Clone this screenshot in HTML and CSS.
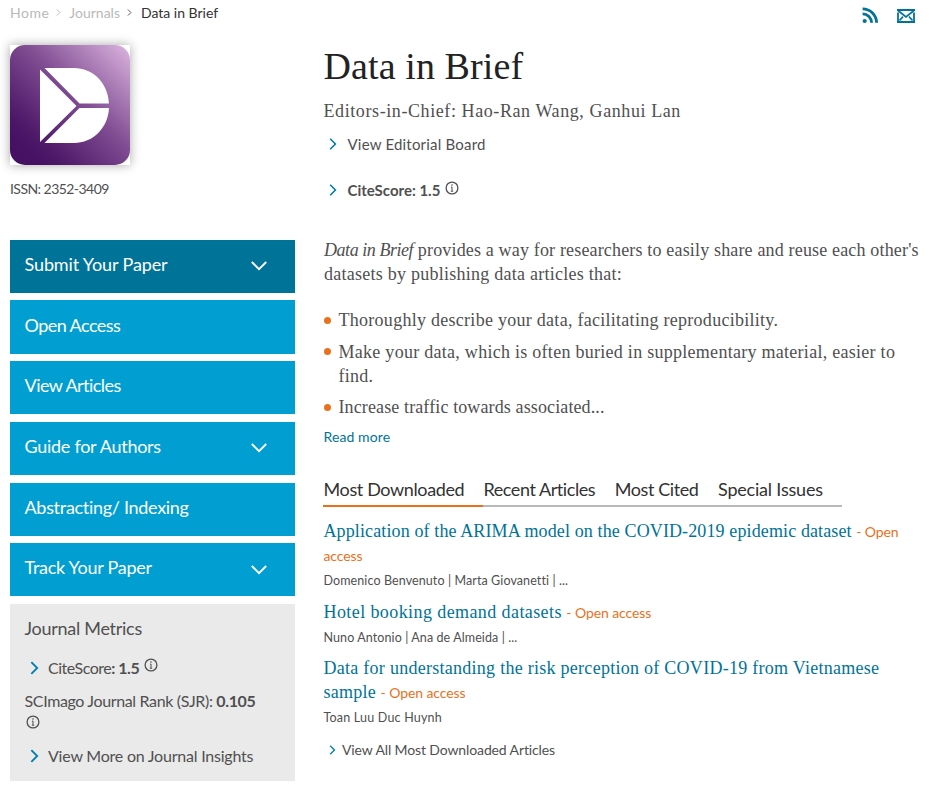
FILE: index.html
```
<!DOCTYPE html>
<html lang="en">
<head>
<meta charset="utf-8">
<title>Data in Brief</title>
<link rel="stylesheet" href="styles.css">
</head>
<body>
<svg width="0" height="0" class="defs" aria-hidden="true">
  <symbol id="chev" viewBox="0 0 8 12"><path d="M1.2 .8 6.4 6 1.2 11.2" fill="none" stroke="currentColor" stroke-width="1.6"/></symbol>
  <symbol id="down" viewBox="0 0 16 10"><path d="M.8 1 8 8.2 15.2 1" fill="none" stroke="currentColor" stroke-width="1.9"/></symbol>
  <symbol id="info" viewBox="0 0 14 14"><circle cx="7" cy="7" r="5.9" fill="none" stroke="currentColor" stroke-width="1.3"/><path d="M7 6v4.2M6 6.1h1M5.800 10.200h2.400" stroke="currentColor" stroke-width="1" fill="none"/><circle cx="7" cy="4" r=".8" fill="currentColor"/></symbol>
</svg>
<header class="top">
  <nav class="crumbs">
    <a class="c-home">Home</a><svg class="sep s1"><use href="#chev"/></svg><a class="c-journals">Journals</a><svg class="sep s2"><use href="#chev"/></svg><span class="c-cur">Data in Brief</span>
  </nav>
  <div class="share">
    <svg width="17" height="17" viewBox="0 0 17 17"><circle cx="2.7" cy="14" r="2.1" fill="currentColor"/><path d="M.6 6.800a9 9 0 0 1 9 9M.6 1.800a14 14 0 0 1 14 14" fill="none" stroke="currentColor" stroke-width="2.8"/></svg>
    <svg width="18" height="14" viewBox="0 0 18 14"><path d="M1 3.500V14M17 3.500V14M0 1H18M0 13H18" stroke="currentColor" stroke-width="1.8" fill="none"/><path d="M1 1.500 9 8 17 1.500M2.500 11.500 6 7.600M15.500 11.500 12 7.600" stroke="currentColor" stroke-width="1.700" fill="none"/></svg>
  </div>
</header>
<section class="intro">
  <div class="cover-col">
    <div class="cover">
      <svg width="120" height="120" viewBox="0 0 120 120">
        <defs><linearGradient id="g" x1="0.12" y1="0.88" x2="1" y2="0"><stop offset="0" stop-color="#471163"/><stop offset=".1" stop-color="#4b1767"/><stop offset=".5" stop-color="#804c92"/><stop offset="1" stop-color="#dcb5e0"/></linearGradient></defs>
        <rect width="120" height="120" rx="15" fill="url(#g)"/>
        <path fill="#fff" d="M30 24.500 66.500 61 30 97ZM34.500 23H64C83 23 98 38 99 58.500H69.500ZM69.500 63H99C98 83 83 98 64 98H34.500Z"/>
      </svg>
    </div>
    <p class="issn">ISSN: 2352-3409</p>
  </div>
  <div class="head">
    <h1>Data in Brief</h1>
    <p class="editors">Editors-in-Chief: Hao-Ran Wang, Ganhui Lan</p>
    <a class="hlink"><svg class="ch"><use href="#chev"/></svg><span class="board">View Editorial Board</span></a>
    <a class="hlink score"><svg class="ch"><use href="#chev"/></svg><b>CiteScore: 1.5</b><svg class="info"><use href="#info"/></svg></a>
  </div>
</section>
<main class="body">
  <aside>
    <nav class="menu">
      <a class="on"><span class="m1">Submit Your Paper</span><svg><use href="#down"/></svg></a>
      <a><span class="m2">Open Access</span></a>
      <a><span class="m3">View Articles</span></a>
      <a><span class="m4">Guide for Authors</span><svg><use href="#down"/></svg></a>
      <a><span class="m5">Abstracting/ Indexing</span></a>
      <a><span class="m6">Track Your Paper</span><svg><use href="#down"/></svg></a>
    </nav>
    <div class="metrics">
      <h2>Journal Metrics</h2>
      <a class="row r1"><svg class="ch"><use href="#chev"/></svg><span>CiteScore<b>: 1.5</b></span><svg class="info"><use href="#info"/></svg></a>
      <p class="sjr">SCImago Journal Rank (SJR): <b>0.105</b></p>
      <svg class="info below"><use href="#info"/></svg>
      <a class="row r3"><svg class="ch"><use href="#chev"/></svg><span>View More on Journal Insights</span></a>
    </div>
  </aside>
  <article>
    <p class="serif"><i>Data in Brief</i><span class="d1"> provides a way for researchers to easily share and reuse each other's</span><br><span class="d2">datasets by publishing data articles that:</span></p>
    <ul class="serif">
      <li><span class="l1">Thoroughly describe your data, facilitating reproducibility.</span></li>
      <li><span class="l2">Make your data, which is often buried in supplementary material, easier to</span><br><span class="l3">find.</span></li>
      <li><span class="l4">Increase traffic towards associated...</span></li>
    </ul>
    <a class="more">Read more</a>
    <div class="tabs"><a class="on t1">Most Downloaded</a><a class="t2">Recent Articles</a><a class="t3">Most Cited</a><a class="t4">Special Issues</a></div>
    <div class="item"><p class="title"><span class="a1">Application of the ARIMA model on the COVID-2019 epidemic dataset</span> <em>- Open<br>access</em></p><p class="by b1">Domenico Benvenuto | Marta Giovanetti | ...</p></div>
    <div class="item"><p class="title"><span class="a2">Hotel booking demand datasets</span> <em>- Open access</em></p><p class="by b2">Nuno Antonio | Ana de Almeida | ...</p></div>
    <div class="item"><p class="title"><span class="a3">Data for understanding the risk perception of COVID-19 from Vietnamese</span><br><span class="a4">sample</span> <em>- Open access</em></p><p class="by b3">Toan Luu Duc Huynh</p></div>
    <a class="all"><svg class="ch"><use href="#chev"/></svg><span>View All Most Downloaded Articles</span></a>
  </article>
</main>
</body>
</html>
```
FILE: styles.css
```
* { box-sizing: border-box; }
body { margin: 0; height: 789px; overflow: hidden; background: #fff; color: #505050; font-family: Lato, "Open Sans", sans-serif; white-space: nowrap; font-size: 15px; }
p, h1, h2, ul { margin: 0; padding: 0; font-weight: 400; }
.defs { position: absolute; }
svg { flex: none; display: block; }
b { font-weight: 700; }
.top { display: flex; justify-content: space-between; height: 45px; padding: 2px 14px 0 10px; }
.crumbs { display: flex; align-items: center; height: 20px; font-size: 14px; color: #b9b9b9; }
.crumbs .sep { width: 5px; height: 7px; }
.crumbs .s1 { margin: 0 8px 0 7px; }
.crumbs .s2 { margin: 0 8px 0 7px; color: #505050; }
.c-home { letter-spacing: .5px; }
.c-cur { color: #323232; margin-left: 1px; }
.share { display: flex; gap: 18px; color: #007398; padding-top: 4.500px; }
.share svg + svg { margin-top: 2px; }
.intro { display: grid; grid-template-columns: 285px 1fr; column-gap: 28px; padding: 0 10px; height: 195px; }
.cover { width: 120px; height: 120px; box-shadow: 0 0 10px rgba(0,0,0,.35); background: #fff; }
.issn { font-size: 14px; line-height: 20px; margin-top: 14px; letter-spacing: -.55px; }
.head h1 { font: 400 38px/44px "Liberation Serif", serif; color: #222; margin-top: -1px; letter-spacing: .1px; padding-left: .5px; }
.editors { font: 18px/24px "Liberation Serif", serif; margin-top: 11px; letter-spacing: .59px; padding-left: .5px; }
.hlink { display: flex; align-items: center; height: 24px; margin-top: 9px; padding-left: 6px; }
.board { letter-spacing: .2px; }
.hlink.score { margin-top: 22px; }
.ch { width: 8px; height: 12px; color: #007dab; }
.hlink .ch { margin-right: 10.500px; }
.info { width: 14px; height: 14px; }
.hlink .info { margin: -5px 0 0 4.500px; }
.body { display: grid; grid-template-columns: 285px 1fr; column-gap: 28px; padding: 0 0 0 10px; }
aside { margin-top: -.25px; }
.menu { display: grid; grid-template-rows: repeat(6, 53.2px); row-gap: 7.5px; font-size: 18px; }
.menu a { background: #009ed1; color: #fff; display: flex; align-items: center; justify-content: space-between; padding: 0 28px 5px 14.500px; }
.m1 { letter-spacing: -.12px; }
.m2, .m3 { letter-spacing: -.55px; }
.m4, .m6 { letter-spacing: -.27px; }
.m5 { letter-spacing: -.3px; }
.menu a.on { background: #007398; }
.menu svg { width: 16px; height: 10px; margin-top: 5px; }
.metrics { background: #eaeaea; height: 177px; margin-top: 7.3px; padding: 12.250px 14px 0 14.500px; }
.metrics h2 { font-size: 18px; line-height: 24px; letter-spacing: -.27px; }
.row { display: flex; align-items: center; height: 24px; padding-left: 5px; font-size: 16px; }
.row .ch { margin-right: 9.500px; height: 14px; width: 9px; }
.r1 { margin-top: 16px; letter-spacing: -.48px; }
.r1 .info { margin: -5px 0 0 5px; }
.sjr { font-size: 16px; line-height: 24px; margin-top: 9px; letter-spacing: -.36px; }
.info.below { margin: 2px 0 0 1px; }
.r3 { margin-top: 15px; letter-spacing: -.22px; }
.serif { font: 18px/24px "Liberation Serif", serif; padding-left: 1px; }
.serif i { letter-spacing: -.45px; }
.d1 { letter-spacing: .165px; }
.d2 { letter-spacing: .25px; }
.l1, .l2, .l3 { letter-spacing: .275px; }
.l4 { letter-spacing: .12px; }
article .serif:first-child { margin-top: -2px; }
ul.serif { list-style: none; margin-top: 22px; }
li { padding-left: 14.500px; margin-bottom: 7.5px; position: relative; }
li::before { content: ""; position: absolute; left: -.5px; top: 8.500px; width: 7px; height: 7px; border-radius: 50%; background: #e9711c; }
.more { display: block; color: #007398; font-size: 14px; line-height: 20px; padding-left: .5px; letter-spacing: .1px; }
.tabs { display: flex; width: 519px; height: 34px; margin-top: 26px; border-bottom: 2px solid #b9b9b9; font-size: 18px; line-height: 32px; color: #323232; }
.tabs a { height: 34px; margin-right: 19.5px; flex: none; }
.tabs .on { width: 160px; margin-right: .5px; padding-left: .5px; border-bottom: 2px solid #e9711c; }
.t1 { letter-spacing: -.37px; }
.t2 { letter-spacing: -.43px; }
.t3 { letter-spacing: -.4px; }
.t4 { letter-spacing: -.2px; }
.item { margin-top: 12.500px; padding-left: .5px; }
.item + .item { margin-top: 9.500px; }
.title { font: 18px/24px "Liberation Serif", serif; color: #007398; }
.title em { font: 14px/0 Lato, sans-serif; letter-spacing: -.1px; color: #e9711c; }
.a1 { letter-spacing: .12px; }
.a2 { letter-spacing: .41px; }
.a3, .a4 { letter-spacing: .27px; }
.by { font-size: 12.5px; line-height: 18px; margin-top: 5px; letter-spacing: .1px; }
.b3 { letter-spacing: .2px; }
.all { display: flex; align-items: center; height: 24px; margin-top: 10.500px; padding-left: 6px; font-size: 14px; letter-spacing: -.12px; }
.all .ch { width: 7px; height: 10px; margin-right: 6px; }
```
